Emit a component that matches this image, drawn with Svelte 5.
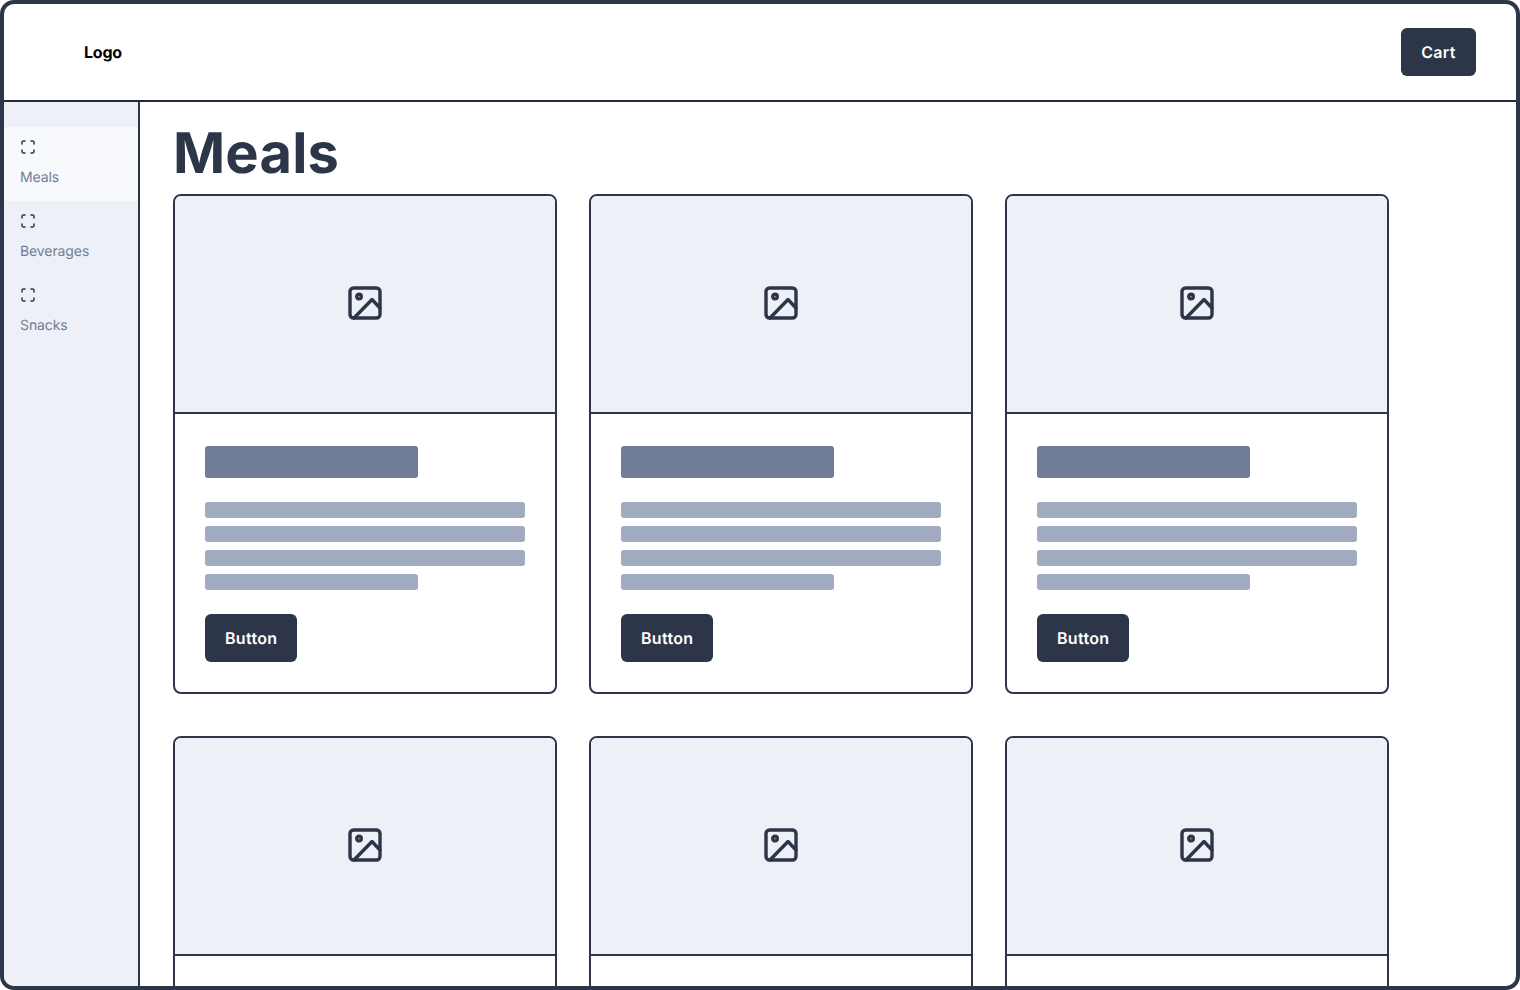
<script>
  const categories = [
    { name: 'Meals', active: true },
    { name: 'Beverages', active: false },
    { name: 'Snacks', active: false }
  ];
  const cards = [1, 2, 3, 4, 5, 6];
</script>

<div class="frame">
  <header class="topbar">
    <span class="logo">Logo</span>
    <button class="btn cart">Cart</button>
  </header>

  <div class="body">
    <nav class="sidebar">
      {#each categories as cat}
        <div class="nav-item" class:active={cat.active}>
          <svg class="nav-icon" width="16" height="16" viewBox="0 0 16 16" fill="none" stroke="currentColor" stroke-width="1.5" stroke-linecap="round" stroke-linejoin="round">
            <path d="M2 5V3.4C2 2.6 2.6 2 3.4 2H5" />
            <path d="M11 2h1.6c.8 0 1.4.6 1.4 1.4V5" />
            <path d="M14 11v1.6c0 .8-.6 1.4-1.4 1.4H11" />
            <path d="M5 14H3.4C2.6 14 2 13.4 2 12.6V11" />
          </svg>
          <span class="nav-label">{cat.name}</span>
        </div>
      {/each}
    </nav>

    <main class="content">
      <h1>Meals</h1>
      <div class="grid">
        {#each cards as card (card)}
          <article class="card">
            <div class="thumb">
              <svg width="36" height="36" viewBox="0 0 36 36" fill="none" stroke="currentColor" stroke-width="3.4" stroke-linecap="round" stroke-linejoin="round">
                <rect x="3" y="3" width="30" height="30" rx="3.5" />
                <circle cx="12" cy="11.6" r="2.3" />
                <path d="M7 33 L25 14.5 L33 23" />
              </svg>
            </div>
            <div class="card-body">
              <div class="bar title"></div>
              <div class="lines">
                <div class="bar line"></div>
                <div class="bar line"></div>
                <div class="bar line"></div>
                <div class="bar line short"></div>
              </div>
              <button class="btn">Button</button>
            </div>
          </article>
        {/each}
      </div>
    </main>
  </div>
</div>

<style>
  :global(body) {
    background: #fff;
    font-family: Inter, "Liberation Sans", sans-serif;
    text-rendering: geometricPrecision;
  }

  .frame {
    box-sizing: border-box;
    height: 990px;
    border: 4px solid #2d3648;
    border-radius: 14px;
    overflow: hidden;
    display: flex;
    flex-direction: column;
    background: #fff;
  }

  .topbar {
    box-sizing: border-box;
    flex-shrink: 0;
    height: 98px;
    display: flex;
    align-items: center;
    justify-content: space-between;
    padding: 0 40px 0 80px;
    border-bottom: 2px solid #232a3a;
  }

  .logo {
    font-size: 16px;
    font-weight: 700;
    letter-spacing: -0.2px;
    color: #000;
  }

  .btn {
    box-sizing: border-box;
    height: 48px;
    padding: 0 20px;
    border: none;
    border-radius: 6px;
    background: #2d3648;
    color: #fff;
    font-family: inherit;
    font-size: 16px;
    font-weight: 600;
    letter-spacing: 0.3px;
    text-rendering: inherit;
  }

  .cart {
    width: 75px;
    padding: 0;
  }

  .body {
    flex: 1;
    display: flex;
    min-height: 0;
  }

  .sidebar {
    box-sizing: border-box;
    width: 136px;
    flex-shrink: 0;
    padding-top: 25px;
    background: #edf0f7;
    border-right: 2px solid #2d3648;
  }

  .nav-item {
    box-sizing: border-box;
    height: 74px;
    padding: 12px 16px 0;
    color: #2d3648;
  }

  .nav-item.active {
    background: #f7f9fc;
  }

  .nav-icon {
    display: block;
  }

  .nav-label {
    display: block;
    margin-top: 13px;
    font-size: 14px;
    line-height: 20px;
    letter-spacing: -0.1px;
    color: #717d96;
  }

  .content {
    flex: 1;
    min-width: 0;
    overflow: hidden;
    padding-left: 33px;
  }

  h1 {
    margin: 14px 0 4px;
    font-size: 56px;
    line-height: 74px;
    font-weight: 700;
    letter-spacing: 0.2px;
    color: #2d3648;
  }

  .grid {
    display: grid;
    grid-template-columns: repeat(3, 384px);
    column-gap: 32px;
    row-gap: 42px;
  }

  .card {
    box-sizing: border-box;
    height: 500px;
    border: 2px solid #2d3648;
    border-radius: 8px;
    overflow: hidden;
  }

  .thumb {
    box-sizing: border-box;
    height: 218px;
    padding-bottom: 2px;
    display: flex;
    align-items: center;
    justify-content: center;
    background: #edf0f7;
    border-bottom: 2px solid #2d3648;
    color: #2d3648;
  }

  .card-body {
    padding: 32px 30px;
  }

  .bar {
    border-radius: 3px;
  }

  .title {
    width: 66.67%;
    height: 32px;
    background: #717d96;
  }

  .lines {
    display: flex;
    flex-direction: column;
    gap: 8px;
    margin: 24px 0;
  }

  .line {
    height: 16px;
    background: #a0abc0;
  }

  .short {
    width: 66.67%;
  }
</style>
